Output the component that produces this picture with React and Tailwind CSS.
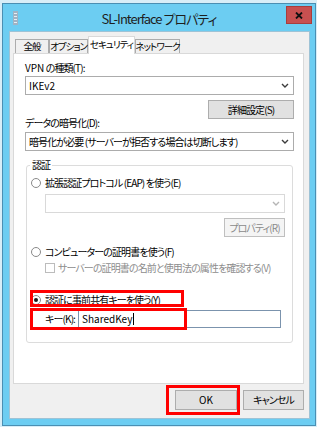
import React from "react";

const ff =
  "font-['Noto_Sans_CJK_JP','Noto_Sans',sans-serif] [font-feature-settings:'palt'] tracking-[-0.9px]";

function Chevron({ disabled }) {
  return (
    <svg width="8" height="5" viewBox="0 0 8 5" className="shrink-0">
      <path
        d="M1 1l3 3 3-3"
        fill="none"
        stroke={disabled ? "#b5b5b5" : "#3c3c3c"}
        strokeWidth="1.4"
      />
    </svg>
  );
}

function Select({ value, disabled, latin }) {
  return (
    <div
      className={`h-[19px] border flex items-center justify-between pl-[3px] pr-[4px] ${
        disabled ? "border-[#d9d9d9] bg-white" : "border-[#acacac] bg-white"
      }`}
    >
      <span className={`leading-none ${latin ? "tracking-normal" : ""}`}>{value}</span>
      <Chevron disabled={disabled} />
    </div>
  );
}

function Radio({ checked }) {
  return (
    <span className="w-[10px] h-[10px] rounded-full border border-[#8a8a8a] bg-white flex items-center justify-center shrink-0">
      {checked && <span className="w-[4px] h-[4px] rounded-full bg-[#1a1a1a]" />}
    </span>
  );
}

function Tab({ label, active }) {
  return (
    <div
      className={`border border-b-0 flex items-center justify-center ${
        active
          ? "h-[18px] bg-white border-[#d9d9d9] relative z-10 -mb-px pb-[2px]"
          : "h-[14px] bg-[#f0f0f0] border-[#acacac]"
      }`}
    >
      <span className="leading-none text-[9.5px] tracking-[-1px]">{label}</span>
    </div>
  );
}

export default function App() {
  return (
    <div className={`w-[317px] h-[427px] bg-[#d8eef8] pt-[3px] pl-[2px] pr-[1px] pb-[1px] text-[10px] text-black whitespace-nowrap ${ff}`}>
      <div className="h-[423px] border border-[#4a8fb3] bg-[#6ccdf2] flex flex-col">
        {/* title bar */}
        <div className="h-[27px] grid grid-cols-[1fr_auto_1fr] items-start">
          <div className="pl-[10px] pt-[7px]">
            <svg width="5" height="14" viewBox="0 0 5 14">
              <rect x="0" y="0" width="5" height="14" fill="#9fb3c4" />
              <rect x="1" y="2" width="3" height="1" fill="#e6eef4" />
              <rect x="1" y="5" width="3" height="1" fill="#e6eef4" />
              <rect x="1" y="8" width="3" height="1" fill="#e6eef4" />
              <rect x="1" y="11" width="3" height="1" fill="#e6eef4" />
            </svg>
          </div>
          <div className="pt-[7px] text-[13px] leading-[16px] tracking-[-1px] text-[#1e1e1e]">SL-Interface プロパティ</div>
          <div className="flex justify-end pr-[3px] pt-[2px]">
            <div className="w-[26px] h-[18px] bg-[#c75050] border border-[#a83d3d] flex items-center justify-center">
              <svg width="8" height="7" viewBox="0 0 8 7">
                <path d="M1 0.5l6 6M7 0.5l-6 6" stroke="#111" strokeWidth="1.8" />
              </svg>
            </div>
          </div>
        </div>

        {/* client area */}
        <div className="ml-[6px] w-[301px] h-[388px] bg-[#f0f0f0] border border-[#9ec3d6] flex flex-col">
          {/* tabs */}
          <div className="mt-[4px] ml-[5px] flex items-end">
            <div className="w-[34px]"><Tab label="全般" /></div>
            <div className="w-[39px]"><Tab label="オプション" /></div>
            <div className="w-[47px]"><Tab label="セキュリティ" active /></div>
            <div className="w-[45px]"><Tab label="ネットワーク" /></div>
          </div>

          {/* panel */}
          <div className="ml-[3px] w-[291px] h-[331px] bg-white border border-[#d9d9d9] pl-[11px] pr-[9px] flex flex-col">
            <div className="mt-[7px] h-[14px] leading-[14px]">
              <span className="tracking-normal">VPN</span> の種類(T):
            </div>
            <div className="mt-[1px]">
              <Select value="IKEv2" latin />
            </div>
            <div className="mt-[5px] flex justify-end">
              <div className="w-[86px] h-[19px] bg-[#e1e1e1] border border-[#adadad] flex items-center justify-center leading-none">
                詳細設定(S)
              </div>
            </div>
            <div className="-mt-[2px] h-[12px] leading-[12px]">データの暗号化(D):</div>
            <div className="mt-[3px]">
              <Select value="暗号化が必要 (サーバーが拒否する場合は切断します)" />
            </div>

            <fieldset className="mt-[7px] ml-[1px] mr-[1px] border border-[#dcdcdc] rounded-[3px] pb-[14px]">
              <legend className="ml-[3px] px-[2px] h-[14px] leading-[14px]">認証</legend>
              <div className="mt-[4px] h-[14px] flex items-center pl-[4px] gap-[4px]">
                <Radio />
                <span className="leading-none">拡張認証プロトコル (EAP) を使う(E)</span>
              </div>
              <div className="pl-[18px] pr-[7px]">
                <div className="mt-[4px]">
                  <Select value="" disabled />
                </div>
                <div className="mt-[5px] flex justify-end">
                  <div className="w-[61px] h-[19px] bg-[#f4f4f4] border border-[#bfbfbf] flex items-center justify-center leading-none text-[#8a8a8a]">
                    プロパティ(R)
                  </div>
                </div>
              </div>
              <div className="mt-[8px] h-[14px] flex items-center pl-[4px] gap-[4px]">
                <Radio />
                <span className="leading-none">コンピューターの証明書を使う(F)</span>
              </div>
              <div className="mt-[2px] h-[14px] flex items-center pl-[18px] gap-[3px] text-[#8d8d8d]">
                <span className="w-[10px] h-[10px] border border-[#bcbcbc] bg-white shrink-0" />
                <span className="leading-none">サーバーの証明書の名前と使用法の属性を確認する(V)</span>
              </div>
              <div className="mt-[18px] h-[14px] flex items-center pl-[4px] gap-[4px] relative">
                <Radio checked />
                <span className="leading-none">認証に事前共有キーを使う(Y)</span>
                <div className="absolute left-[3px] top-[-3px] w-[154px] h-[17px] border-[3px] border-[#ff0000]" />
              </div>
              <div className="mt-[3px] h-[18px] flex items-center relative">
                <div className="w-[51px] text-right pr-[3px] leading-none">キー(K):</div>
                <div className="w-[203px] h-[18px] border border-[#7b93ad] bg-white flex items-center pl-[3px]">
                  <span className="leading-none tracking-normal">SharedKey</span>
                  <span className="w-px h-[12px] bg-black ml-px" />
                </div>
                <div className="absolute left-[3px] top-[-2px] w-[157px] h-[22px] border-[3px] border-[#ff0000]" />
              </div>
            </fieldset>
          </div>

          {/* buttons */}
          <div className="mt-[6px] flex justify-end gap-[6px] pr-[5px]">
            <div className="relative">
              <div className="w-[62px] h-[20px] bg-[#e1e1e1] border border-[#adadad] flex items-center justify-center leading-none tracking-normal">
                OK
              </div>
              <div className="absolute left-[-9px] right-[-3px] top-[-5px] bottom-[-5px] border-[3px] border-[#ff0000]" />
            </div>
            <div className="w-[61px] h-[20px] bg-[#e1e1e1] border border-[#adadad] flex items-center justify-center leading-none">
              キャンセル
            </div>
          </div>
        </div>
      </div>
    </div>
  );
}
